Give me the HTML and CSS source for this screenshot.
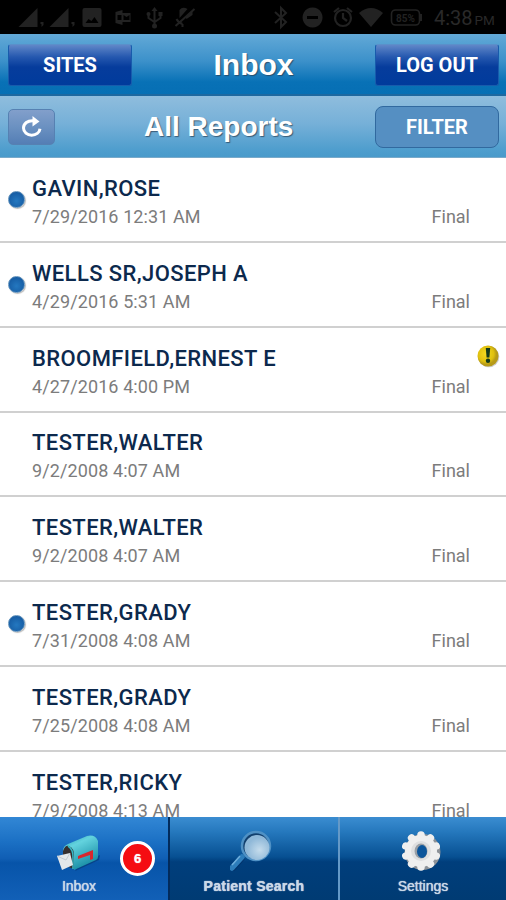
FILE: index.html
```html
<!DOCTYPE html>
<html lang="en">
<head>
  <meta charset="UTF-8">
  <meta name="viewport" content="width=device-width, initial-scale=1.0">
  <title>Inbox</title>
  <link rel="stylesheet" href="styles.css">
</head>
<body>
  <div class="app">

    <div class="status-bar">
      <svg class="status-left" width="190" height="34" viewBox="0 0 190 34" fill="#222">
        <path d="M16 27L35 8V27ZM47 27L66 8V27Z"/>
        <path d="M38 22h3v3l-2 2v-3h-1zM69 22h3v3l-2 2v-3h-1z"/>
        <path fill-rule="evenodd" d="M82 8h15q2 0 2 2v15q0 2-2 2H82q-2 0-2-2V10q0-2 2-2zM83 23h13l-4-6-3 4-3-2z"/>
        <path fill-rule="evenodd" d="M113 12l7-2v3h8v9h-8v3l-7-2zM115 15v5h4v-5zM121 15l3 2 3-2v5h-6z"/>
        <g fill="none" stroke="#222" stroke-width="2">
          <path d="M152 10v16M146 14v4l6 4 6-4v-4"/>
          <path d="M173 26L192 9M174 19q2 4 6 5M180 24v3"/>
        </g>
        <path d="M152 7l3 4h-6z"/><circle cx="152" cy="26" r="2.500"/><circle cx="146" cy="14" r="2"/><path d="M156 12h4v4h-4z"/>
        <path d="M177 10q3-4 8-1l-8 9zM183 17l7-6v4l-6 4z"/>
      </svg>
      <svg class="status-right" width="160" height="34" viewBox="272 0 160 34">
        <path d="M275 12l11 10-5 5V8l5 5-11 10" fill="none" stroke="#222" stroke-width="2"/>
        <path fill="#222" fill-rule="evenodd" d="M312.500 7.500a10 10 0 1 0 .1 0zM307 16h11v3h-11z"/>
        <g fill="none" stroke="#222" stroke-width="2.200"><circle cx="343" cy="18" r="8"/><path d="M343 13v5l4 3M334 12l5-4M352 12l-5-4"/></g>
        <path fill="#222" d="M359 13q12-10 24 0L371 27z"/>
        <rect x="391.500" y="10" width="28" height="15" rx="4" fill="none" stroke="#222" stroke-width="1.600"/>
        <path d="M421 14v7" stroke="#222" stroke-width="2"/>
        <text class="battery" x="405.500" y="21.500">85%</text>
      </svg>
      <span class="clock">4:38 <small>PM</small></span>
    </div>

    <header class="top-bar">
      <button class="btn btn-dark">SITES</button>
      <h1>Inbox</h1>
      <button class="btn btn-dark">LOG OUT</button>
    </header>

    <div class="sub-bar">
      <button class="btn btn-refresh" aria-label="Refresh">
        <svg width="24" height="24" viewBox="0 0 24 24">
          <path d="M14 5.800C7.500 5 3.500 8.800 3.500 13c0 4.200 3.700 7.200 8.200 7.200 4.400 0 7.800-2.700 8.300-6.400" fill="none" stroke="#fff" stroke-width="3"/>
          <path d="M12.500 1L19.500 6.500l-7 5z" fill="#fff"/>
        </svg>
      </button>
      <h2>All Reports</h2>
      <button class="btn btn-filter">FILTER</button>
    </div>

    <ul class="reports">
      <li class="report unread">
        <div class="info"><span class="name">GAVIN,ROSE</span><span class="date">7/29/2016 12:31 AM</span></div>
        <span class="state">Final</span>
      </li>
      <li class="report unread">
        <div class="info"><span class="name">WELLS SR,JOSEPH A</span><span class="date">4/29/2016 5:31 AM</span></div>
        <span class="state">Final</span>
      </li>
      <li class="report">
        <div class="info"><span class="name">BROOMFIELD,ERNEST E</span><span class="date">4/27/2016 4:00 PM</span></div>
        <span class="state">Final</span>
        <svg class="alert" width="24" height="24" viewBox="0 0 24 24">
          <defs>
            <radialGradient id="yellow" cx=".4" cy=".4"><stop offset="0" stop-color="#f4da20"/><stop offset=".75" stop-color="#dfc00f"/><stop offset="1" stop-color="#b79b18"/></radialGradient>
          </defs>
          <circle cx="12.800" cy="12.800" r="10.500" fill="#aaa" opacity=".6"/>
          <circle cx="12" cy="12" r="10.500" fill="url(#yellow)"/>
          <path d="M9.800 4h4.400l-.8 9.500h-2.800z" fill="#12391c"/>
          <circle cx="12" cy="16.700" r="2.200" fill="#12391c"/>
        </svg>
      </li>
      <li class="report">
        <div class="info"><span class="name">TESTER,WALTER</span><span class="date">9/2/2008 4:07 AM</span></div>
        <span class="state">Final</span>
      </li>
      <li class="report">
        <div class="info"><span class="name">TESTER,WALTER</span><span class="date">9/2/2008 4:07 AM</span></div>
        <span class="state">Final</span>
      </li>
      <li class="report unread">
        <div class="info"><span class="name">TESTER,GRADY</span><span class="date">7/31/2008 4:08 AM</span></div>
        <span class="state">Final</span>
      </li>
      <li class="report">
        <div class="info"><span class="name">TESTER,GRADY</span><span class="date">7/25/2008 4:08 AM</span></div>
        <span class="state">Final</span>
      </li>
      <li class="report">
        <div class="info"><span class="name">TESTER,RICKY</span><span class="date">7/9/2008 4:13 AM</span></div>
        <span class="state">Final</span>
      </li>
    </ul>

    <nav class="tabs">
      <a class="tab active">
        <svg width="48" height="44" viewBox="0 -3 48 44">
          <defs>
            <linearGradient id="box" x1="0" y1="0" x2=".5" y2="1"><stop offset="0" stop-color="#279fb4"/><stop offset=".35" stop-color="#63d3de"/><stop offset="1" stop-color="#168ba3"/></linearGradient>
          </defs>
          <path d="M20 39l24-11 1-5-20 9z" fill="#07366f" opacity=".6"/>
          <path d="M8 19q0-5 5-7L32 4q8-2 11 5v16q0 2-2 3L19 38l-2-15z" fill="url(#box)"/>
          <path d="M8 19q2-6 6-5 5 2 5 10v13l-11-4z" fill="#352f30"/>
          <path d="M18 37V25q0-8-5-11" fill="none" stroke="#36bac8" stroke-width="1.500"/>
          <path d="M2 24l13-3 3 12-11 5z" fill="#e3e7ea"/>
          <path d="M2 24l9 4 4-7" fill="none" stroke="#c3cad1" stroke-width="1"/>
          <path d="M23 24l15-6v9l-3 1v-5l-12 4z" fill="#d8272d"/>
        </svg>
        <span>Inbox</span>
        <b class="badge">6</b>
      </a>
      <a class="tab search">
        <svg width="48" height="44" viewBox="5 -1 48 44">
          <defs>
            <radialGradient id="lens" cx=".6" cy=".6"><stop offset="0" stop-color="#c5dcec"/><stop offset="1" stop-color="#8fb8d8"/></radialGradient>
          </defs>
          <path d="M17 28L8 38" stroke="#03295d" stroke-width="6" stroke-linecap="round" opacity=".5"/>
          <path d="M17 27L7 38" stroke="#2d7dbb" stroke-width="5.500" stroke-linecap="round"/>
          <path d="M15 26L7 35" stroke="#6eaedc" stroke-width="1.500"/>
          <circle cx="31" cy="16" r="14" fill="#12406e" stroke="#4f91c5" stroke-width="2.500"/>
          <circle cx="32" cy="17.500" r="12.500" fill="url(#lens)"/>
        </svg>
        <span>Patient Search</span>
      </a>
      <a class="tab settings">
        <svg width="48" height="44" viewBox="2 -1 48 44">
          <circle cx="25.500" cy="22" r="18" fill="#8d9298"/>
          <g fill="#efefef">
            <circle cx="24" cy="21" r="16"/>
            <g stroke="#efefef" stroke-width="7.500" stroke-linecap="round">
              <path d="M24 5v32"/>
              <path d="M24 5v32" transform="rotate(36 24 21)"/>
              <path d="M24 5v32" transform="rotate(72 24 21)"/>
              <path d="M24 5v32" transform="rotate(108 24 21)"/>
              <path d="M24 5v32" transform="rotate(144 24 21)"/>
            </g>
          </g>
          <circle cx="24" cy="21" r="10" fill="#dedfe0"/>
          <ellipse cx="24" cy="21" rx="6.500" ry="7.500" fill="#999fa6"/>
          <ellipse cx="25" cy="21.500" rx="5" ry="6.500" fill="#0b559b"/>
        </svg>
        <span>Settings</span>
      </a>
    </nav>

  </div>
</body>
</html>
```
FILE: styles.css
```css
* {
  box-sizing: border-box;
}

body {
  margin: 0;
  font-family: Roboto, sans-serif;
  background: #fff;
}

.app {
  display: flex;
  flex-direction: column;
  height: 900px;
  overflow: hidden;
}

/* status bar */
.status-bar {
  display: flex;
  flex: none;
  height: 34px;
  background: #000;
  color: #292929;
}

.status-left {
  width: 195px;
  overflow: visible;
}

.status-right {
  margin-left: 77px;
}

.battery {
  font-size: 10px;
  font-weight: bold;
  fill: #222;
  text-anchor: middle;
}

.clock {
  margin-left: 2px;
  font-size: 20px;
  line-height: 36px;
  white-space: nowrap;
}

.clock small {
  margin-left: -3px;
  font-size: 13.5px;
}

/* headers */
.top-bar,
.sub-bar {
  display: flex;
  flex: 0 0 62px;
  align-items: center;
  justify-content: space-between;
  padding: 0 7px 0 8px;
  color: #fff;
}

.top-bar {
  padding-top: 2px;
  background: linear-gradient(#63a9d7, #3c91ca 45%, #0871b6 80%, #066fb4);
  border-bottom: 2px solid #1d68a0;
}

.sub-bar {
  background: linear-gradient(#8fbddd, #76b0d8 45%, #4d9dcd 90%, #499aca);
  border-bottom: 1px solid #79aaca;
}

h1,
h2 {
  margin: 0;
  font-family: "Liberation Sans", Arial, sans-serif;
  text-shadow: 1px 1px 1px rgba(40, 60, 80, 0.7);
}

h1 {
  font-size: 30px;
}

h2 {
  margin-left: 69px;
  font-size: 28px;
  flex: 1;
  padding-left: 20px;
}

.btn {
  width: 124px;
  height: 42px;
  padding: 0;
  border: 1px solid #185bac;
  border-radius: 3px;
  color: #fff;
  font: bold 20px Roboto, sans-serif;
}

.btn-dark {
  border-top-color: #5b90ca;
  background: linear-gradient(#6087c8, #2558af 30%, #063c9c 55%, #003b9c);
}

.btn-refresh {
  display: flex;
  align-items: center;
  justify-content: center;
  width: 47px;
  height: 36px;
  border-color: #5681b2;
  border-radius: 5px;
  background: linear-gradient(#829fcb, #6b91c1 50%, #547eb5);
}

.btn-filter {
  border: 1px solid #31699f;
  border-radius: 8px;
  background: #558fc2;
}

/* report list */
.reports {
  flex: 1;
  min-height: 0;
  margin: 0;
  padding: 0;
  overflow: hidden;
  list-style: none;
}

.report {
  position: relative;
  display: flex;
  align-items: flex-end;
  justify-content: space-between;
  height: 84.85px;
  padding: 0 36px 12px 32px;
  border-bottom: 2px solid #d0d0d0;
  font-size: 18px;
  line-height: 24px;
  color: #7c7c7c;
}

.info {
  display: flex;
  flex-direction: column;
}

.name {
  margin-bottom: 2px;
  font-size: 22px;
  font-weight: 500;
  line-height: 28px;
  letter-spacing: 0.4px;
  color: #0c294d;
}

.date {
  letter-spacing: 0.1px;
}

.unread::before {
  content: "";
  position: absolute;
  left: 8px;
  top: 33px;
  width: 15px;
  height: 15px;
  border: 1px solid #5a8db9;
  border-radius: 50%;
  background: radial-gradient(circle at 50% 60%, #2478c0, #115299);
  box-shadow: 1px 1px 1px #bbb;
}

.alert {
  position: absolute;
  right: 6px;
  top: 16px;
}

/* bottom tabs */
.tabs {
  display: grid;
  grid-template-columns: 168px 170px 168px;
  flex: 0 0 83px;
}

.tab {
  position: relative;
  display: flex;
  flex-direction: column;
  align-items: center;
  padding-top: 12px;
  background: linear-gradient(#3b8dd1, #2578bd 18%, #075092 48%, #003e7c 54%, #003b73);
  color: #c9d8e8;
  font: 14px/18px "Liberation Sans", Arial, sans-serif;
  text-shadow: 0 0 1px #fff;
}

.tab span {
  margin-top: 4px;
}

.active {
  padding-right: 10px;
  background: linear-gradient(#3287d5, #1b70c4 30%, #105eb4 50%, #0754a9 55%, #1260b7);
}

.search {
  border-left: 2px solid #022b5c;
}

.search span {
  font-weight: bold;
  letter-spacing: 0.25px;
}

.settings {
  border-left: 2px solid #6499c7;
}

.badge {
  position: absolute;
  left: 120px;
  top: 24px;
  width: 35px;
  height: 35px;
  border: 3px solid #fff;
  border-radius: 50%;
  background: #f50d12;
  color: #fff;
  font-size: 13px;
  line-height: 29px;
  text-align: center;
}
```
